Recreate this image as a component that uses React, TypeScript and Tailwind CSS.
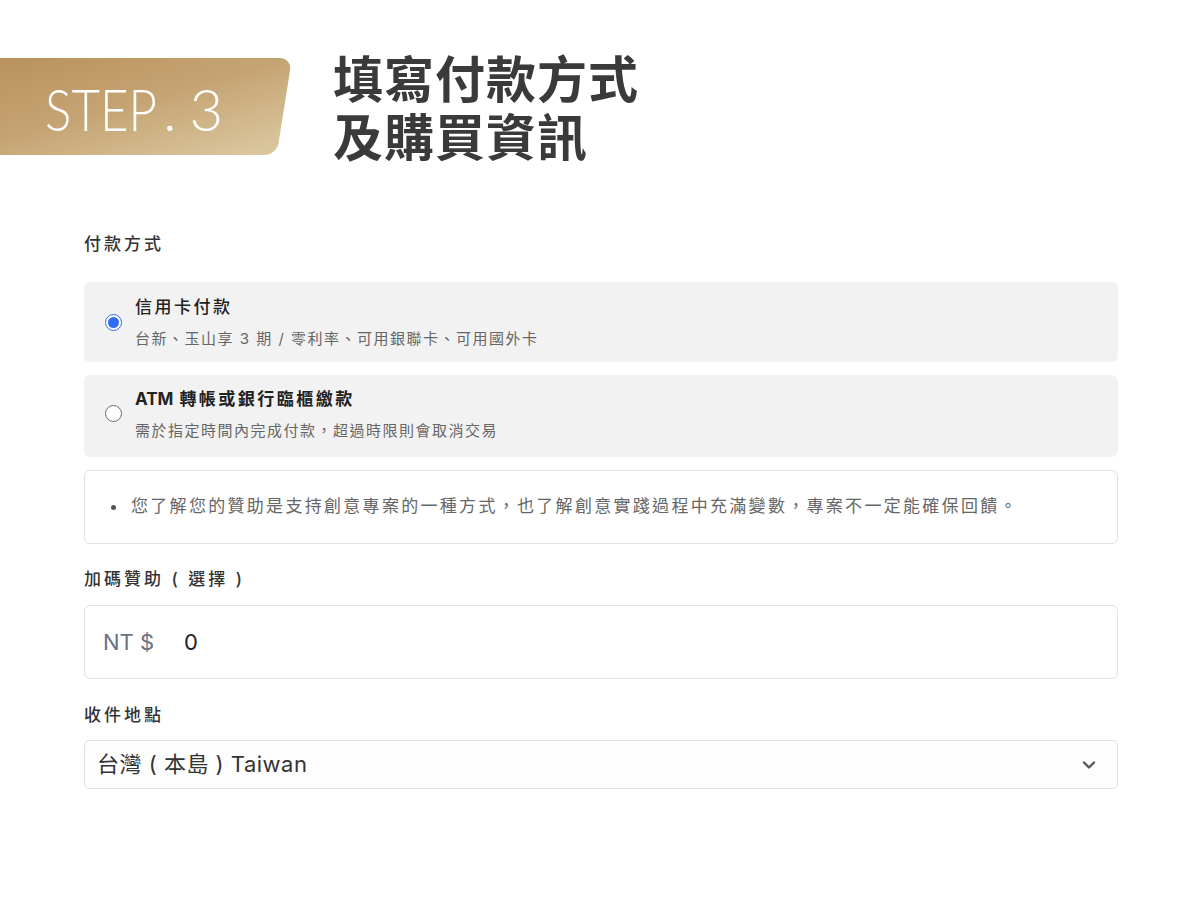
import React, { useState } from 'react';
import { ChevronDown } from 'lucide-react';

const sans = { fontFamily: 'Inter, "Noto Sans CJK TC", sans-serif' };

interface PayOption {
    id: string;
    prefix?: string;
    title: string;
    desc: string;
}

const options: PayOption[] = [
    { id: 'card', title: '信用卡付款', desc: '台新、玉山享 3 期 / 零利率、可用銀聯卡、可用國外卡' },
    { id: 'atm', prefix: 'ATM', title: '轉帳或銀行臨櫃繳款', desc: '需於指定時間內完成付款，超過時限則會取消交易' },
];

const App: React.FC = () => {
    const [method, setMethod] = useState('card');

    return (
        <div lang="zh-Hant-TW" className="min-h-[900px] w-[1200px] bg-white pt-[57px]" style={sans}>
            {/* Step header */}
            <div className="flex items-start gap-[41px]">
                <div className="relative mt-[1px] h-[97px] w-[292px] shrink-0 overflow-hidden">
                    <div className="absolute inset-y-0 -left-[40px] right-0 origin-top -skew-x-[9deg] rounded-[12px] bg-gradient-to-br from-[#b78f5a] via-[#c5a473] to-[#dcc9a1]" />
                    <div
                        className="relative flex h-full items-center pl-[45px] pt-[4px] text-[58px] font-light leading-none text-white"
                        style={{ fontFamily: 'Lato, "Noto Sans", sans-serif' }}
                    >
                        <span className="inline-block w-[115px] origin-left scale-x-[0.85]">STEP</span>
                        <span className="ml-[3px]">.</span>
                        <span className="ml-[13px]">3</span>
                    </div>
                </div>
                <h1
                    className="-mt-[10px] text-[50px] font-bold leading-[58px] tracking-[1px] text-[#3b3a39]"
                    style={{ fontFamily: '"Noto Sans CJK TC", sans-serif' }}
                >
                    填寫付款方式
                    <br />
                    及購買資訊
                </h1>
            </div>

            {/* Form */}
            <div className="mx-[84px] mt-[69px] w-[1034px]">
                <div className="text-[17px] font-medium leading-[24px] tracking-[3px] text-[#333]">付款方式</div>

                <div className="mt-[26px] flex flex-col gap-[13px]">
                    {options.map((opt) => {
                        const active = method === opt.id;
                        return (
                            <label
                                key={opt.id}
                                className={`flex cursor-pointer items-center gap-[13px] rounded-[6px] bg-[#f2f2f2] pl-[21px] ${opt.id === 'card' ? 'h-[80px]' : 'h-[82px] pb-[5px]'}`}
                                onClick={() => setMethod(opt.id)}
                            >
                                <span
                                    className={`flex h-[17px] w-[17px] shrink-0 items-center justify-center rounded-full border bg-white ${active ? 'border-[#2f6bf5]' : 'border-[#6b6b6b]'}`}
                                >
                                    {active && <span className="h-[11px] w-[11px] rounded-full bg-[#2f6bf5]" />}
                                </span>
                                <div className="flex flex-col">
                                    <span className={`text-[17px] leading-[24px] tracking-[2.5px] text-[#222] ${opt.prefix ? 'font-bold' : 'font-medium'}`}>
                                        {opt.prefix && <span className="mr-[6px] tracking-normal">{opt.prefix}</span>}
                                        {opt.title}
                                    </span>
                                    <span className="mt-[10px] text-[15px] leading-[20px] tracking-[1.5px] text-[#666]">
                                        {opt.desc}
                                    </span>
                                </div>
                            </label>
                        );
                    })}
                </div>

                {/* Notice */}
                <div className="mt-[13px] flex h-[74px] items-center rounded-[6px] border border-[#dfe1ea] pl-[26px] text-[17px] tracking-[2.3px] text-[#666]">
                    <span className="mr-[15px] h-[5px] w-[5px] shrink-0 rounded-full bg-[#555]" />
                    您了解您的贊助是支持創意專案的一種方式，也了解創意實踐過程中充滿變數，專案不一定能確保回饋。
                </div>

                {/* Extra support */}
                <div className="mt-[23px] text-[17px] font-medium leading-[24px] tracking-[3px] text-[#333]">
                    加碼贊助 ( 選擇 )
                </div>
                <div className="mt-[14px] flex h-[74px] items-center rounded-[6px] border border-[#e2e2e2] pl-[18px]">
                    <span className="w-[81px] text-[22px] text-[#6b7280]">NT $</span>
                    <span className="text-[22px] text-[#222]">0</span>
                </div>

                {/* Shipping location */}
                <div className="mt-[24px] text-[17px] font-medium leading-[24px] tracking-[3px] text-[#333]">收件地點</div>
                <div className="mt-[13px] flex h-[49px] items-center justify-between rounded-[5px] border border-[#e2e2e2] bg-[#fdfdfd] pl-[12px] pr-[18px]">
                    <span className="text-[22px] tracking-[0.5px] text-[#333]">台灣 ( 本島 ) Taiwan</span>
                    <ChevronDown size={20} strokeWidth={2.75} className="text-[#555]" />
                </div>
            </div>
        </div>
    );
};

export default App;
